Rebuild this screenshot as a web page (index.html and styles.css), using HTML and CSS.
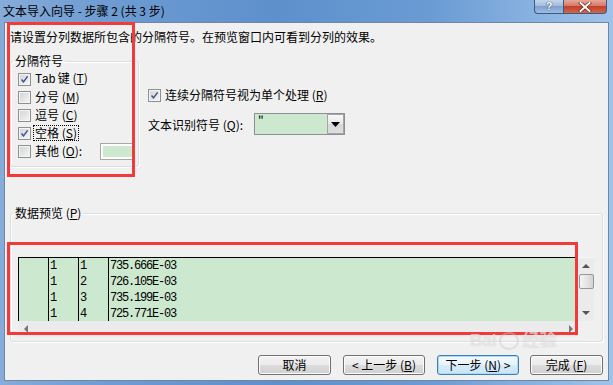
FILE: index.html
```html
<!DOCTYPE html>
<html lang="zh-CN">
<head>
<meta charset="utf-8">
<title>文本导入向导</title>
<link rel="stylesheet" href="styles.css">
</head>
<body>
<div class="window">
  <div class="titlebar">
    <span class="title">文本导入向导 - 步骤 2 (共 3 步)</span>
    <div class="caption-btns">
      <div class="cap help"><span class="q">?</span></div>
      <div class="cap close"><svg width="14" height="10" viewBox="0 0 14 10"><path d="M2.5 1 L11.5 9 M11.5 1 L2.5 9" stroke="#6b1a10" stroke-width="3.2" stroke-linecap="square"/><path d="M2.5 1 L11.5 9 M11.5 1 L2.5 9" stroke="#fff" stroke-width="2" stroke-linecap="square"/></svg></div>
    </div>
  </div>
  <div class="client">
    <p class="intro">请设置分列数据所包含的分隔符号。在预览窗口内可看到分列的效果。</p>
    <div class="middle">
      <fieldset class="group delims">
        <legend>分隔符号</legend>
        <div class="cb-row"><span class="cb"><svg viewBox="0 0 13 13"><path d="M3 6.5 L5.3 9.3 L10.2 2.8" fill="none" stroke="#3b4f8e" stroke-width="1.7"/></svg></span><span class="lbl"><span class="mono">Tab</span> 键 (<u>T</u>)</span></div>
        <div class="cb-row"><span class="cb"></span><span class="lbl">分号 (<u>M</u>)</span></div>
        <div class="cb-row"><span class="cb"></span><span class="lbl">逗号 (<u>C</u>)</span></div>
        <div class="cb-row"><span class="cb"><svg viewBox="0 0 13 13"><path d="M3 6.5 L5.3 9.3 L10.2 2.8" fill="none" stroke="#3b4f8e" stroke-width="1.7"/></svg></span><span class="lbl focus">空格 (<u>S</u>)</span></div>
        <div class="cb-row"><span class="cb"></span><span class="lbl other-lbl">其他 (<u>O</u>):</span><span class="textbox"><span class="fill"></span></span></div>
      </fieldset>
      <div class="options">
        <div class="cb-row"><span class="cb"><svg viewBox="0 0 13 13"><path d="M3 6.5 L5.3 9.3 L10.2 2.8" fill="none" stroke="#3b4f8e" stroke-width="1.7"/></svg></span><span class="lbl">连续分隔符号视为单个处理 (<u>R</u>)</span></div>
        <div class="qual-row">
          <span class="qual-lbl">文本识别符号 (<u>Q</u>):</span>
          <div class="combo"><span class="combo-val">"</span><span class="combo-btn"><svg width="9" height="5" viewBox="0 0 9 5"><path d="M0 0 H9 L4.5 5 Z" fill="#000"/></svg></span></div>
        </div>
      </div>
    </div>
    <fieldset class="group preview">
      <legend>数据预览 (<u>P</u>)</legend>
      <div class="grid-wrap">
        <div class="grid-main">
          <div class="grid">
            <div class="col c0"></div>
            <div class="col c1"><div>1</div><div>1</div><div>1</div><div>1</div></div>
            <div class="col c2"><div>1</div><div>2</div><div>3</div><div>4</div></div>
            <div class="col c3"><div>735.666E-03</div><div>726.105E-03</div><div>735.199E-03</div><div>725.771E-03</div></div>
          </div>
          <div class="vscroll">
            <span class="arrow up"></span>
            <span class="thumb"></span>
            <span class="arrow down"></span>
          </div>
        </div>
        <div class="hscroll">
          <span class="arrow left"></span>
          <span class="arrow right"></span>
        </div>
      </div>
    </fieldset>
    <div class="buttons">
      <button class="btn w73">取消</button>
      <button class="btn w82 g12">&lt; 上一步 (<u>B</u>)</button>
      <button class="btn w82 g12 focused">下一步 (<u>N</u>) &gt;</button>
      <button class="btn w73 g11">完成 (<u>F</u>)</button>
    </div>
  </div>
  <div class="mark mark-delims"></div>
  <div class="mark mark-preview"></div>
  <div class="watermark">Bai<span class="paw"></span>经验</div>
</div>
</body>
</html>
```

FILE: styles.css
```css
* { box-sizing: border-box; margin: 0; padding: 0; }
html, body { width: 613px; height: 385px; overflow: hidden; }
body {
  font-family: "Noto Sans CJK SC", "Noto Sans", sans-serif;
  font-size: 12px;
  color: #000;
  background: #7ea6d6;
}
u { text-decoration: underline; text-underline-offset: 1px; }

.window {
  position: relative;
  width: 613px;
  height: 385px;
  display: flex;
  flex-direction: column;
  background: linear-gradient(to right, #86acd9 0%, #6d9bd2 18%, #5e90cc 45%, #6a9bd3 70%, #9fc3ea 100%);
}

/* title bar */
.titlebar {
  height: 22px;
  display: flex;
  justify-content: space-between;
  align-items: flex-start;
}
.title { padding-left: 3px; line-height: 22px; font-size: 12px; white-space: nowrap; }
.caption-btns { display: flex; margin-right: 6px; }
.cap {
  height: 14px;
  display: flex;
  align-items: center;
  justify-content: center;
  border: 1px solid #3b5a82;
  border-top: none;
  overflow: hidden;
}
.help {
  width: 29px;
  border-radius: 0 0 0 4px;
  border-right: none;
  background: linear-gradient(#c4d6ec, #9cb8dc 50%, #7fa1cf 50%, #9fbde2);
}
.q {
  color: #fff;
  font-family: "Liberation Sans", sans-serif;
  font-weight: bold;
  font-size: 11px;
  line-height: 13px;
  text-shadow: 0 0 1px #2a3f60, 0 0 1px #2a3f60;
}
.close {
  width: 44px;
  border-radius: 0 0 4px 0;
  background: linear-gradient(#e6a89b, #d5735f 50%, #c2412a 50%, #d0664c);
}

/* client area */
.client {
  flex: 1;
  margin: 0 4px 4px 4px;
  border: 1px solid #6f86a6;
  background: #f0f0f0;
  padding: 0 5px 0 5px;
  display: flex;
  flex-direction: column;
}
.intro { margin-top: 6px; line-height: 16px; white-space: nowrap; }

.middle { margin-top: 9px; display: flex; align-items: flex-start; }

.group {
  border: 1px solid #d5dfe5;
  border-radius: 3px;
  box-shadow: inset 1px 1px 0 #fff, 1px 1px 0 #fff;
  min-width: 0;
}
.group legend {
  line-height: 14px;
  padding: 0 2px;
  margin-left: -5px;
  white-space: nowrap;
}
.delims {
  width: 129px;
  padding: 2px 0 6px 7px;
}
.cb-row {
  height: 18px;
  display: flex;
  align-items: center;
  gap: 4px;
  white-space: nowrap;
}
.cb {
  width: 13px;
  height: 13px;
  flex: none;
  border: 1px solid #8e8f8f;
  background: linear-gradient(135deg, #cfd2d6, #f6f6f6);
  box-shadow: inset 0 0 0 1px #f4f4f4;
  display: flex;
}
.cb svg { width: 11px; height: 11px; }
.mono { font-family: "Liberation Mono", monospace; letter-spacing: -0.5px; }
.lbl { line-height: 14px; }
.focus { outline: 1px dotted #000; outline-offset: 0px; padding: 0 1px; margin-left: -1px; }
.other-lbl { width: 61px; flex: none; }
.textbox {
  width: 35px;
  height: 17px;
  flex: none;
  border: 1px solid #a8a8a8;
  background: #fff;
  padding: 2px;
  display: flex;
}
.textbox .fill { flex: 1; background: #cce8cf; }

.options { margin-left: 9px; padding-top: 32px; }
.qual-row { margin-top: 9px; display: flex; align-items: center; height: 22px; }
.qual-lbl { width: 106px; flex: none; white-space: nowrap; }
.combo {
  width: 91px;
  height: 22px;
  border: 1px solid #8d9093;
  display: flex;
  background: #cce8cf;
}
.combo-val { flex: 1; padding-left: 3px; line-height: 14px; font-size: 12px; }
.combo-btn {
  width: 17px;
  border: 1px solid #a5a5a5;
  background: linear-gradient(#f7f7f7, #e8e8e8 50%, #d8d8d8 50%, #dedede);
  display: flex;
  align-items: center;
  justify-content: center;
}

/* preview */
.preview {
  margin-top: 39px;
  width: 593px;
  padding: 37px 8px 4px 7px;
}
.grid-wrap { height: 80px; display: flex; flex-direction: column; }
.grid-main { height: 64px; display: flex; }
.grid {
  flex: 1;
  display: flex;
  border-top: 1px solid #000;
  border-left: 1px solid #000;
  background: #cce8cf;
  font-family: "Liberation Mono", monospace;
  font-size: 12px;
  letter-spacing: -1.2px;
  line-height: 16px;
  overflow: hidden;
}
.col { flex: none; height: 100%; }
.c0 { width: 29px; }
.c1, .c2 { width: 30px; border-left: 1px solid #000; padding-left: 1px; }
.c3 { flex: 1; border-left: 1px solid #000; padding-left: 1px; }

.vscroll {
  width: 16px;
  flex: none;
  background: #ebebeb;
  display: flex;
  flex-direction: column;
  align-items: center;
  border-top: 1px solid #f6f6f6;
}
.arrow { width: 0; height: 0; border: 4px solid transparent; flex: none; }
.arrow.up { border-bottom-color: #555; border-top-width: 0; margin-top: 6px; }
.arrow.down { border-top-color: #555; border-bottom-width: 0; margin-top: auto; margin-bottom: 6px; }
.thumb {
  margin-top: 6px;
  width: 15px;
  height: 15px;
  border: 1px solid #979797;
  border-radius: 2px;
  background: linear-gradient(to right, #f4f4f4, #e2e2e2 60%, #d2d2d2);
}
.hscroll {
  height: 16px;
  background: #ebebeb;
  display: flex;
  align-items: center;
  padding: 0 5px 0 6px;
  margin-right: 16px;
}
.arrow.left { border-right-color: #777; border-left-width: 0; }
.arrow.right { border-left-color: #777; border-right-width: 0; margin-left: auto; }

/* buttons */
.buttons {
  margin-top: 13px;
  display: flex;
  justify-content: flex-end;
}
.btn {
  height: 20px;
  font-family: "Noto Sans CJK SC", "Noto Sans", sans-serif;
  font-size: 12px;
  line-height: 16px;
  color: #000;
  border: 1px solid #707070;
  border-radius: 3px;
  background: linear-gradient(#f2f2f2, #ebebeb 50%, #dddddd 50%, #cfcfcf);
  box-shadow: inset 0 0 0 1px #fcfcfc;
  white-space: nowrap;
}
.w73 { width: 73px; }
.w82 { width: 82px; }
.g11 { margin-left: 11px; }
.g12 { margin-left: 12px; }
.btn.focused {
  border-color: #3c7fb1;
  background: linear-gradient(#f4fafe, #e6f3fb 50%, #d6ebf8 50%, #c9e4f6);
  box-shadow: inset 0 0 0 1px #a9dbf6;
}

/* red annotation boxes */
.mark { position: absolute; border: 3px solid #f23a3a; }
.mark-delims { left: 7px; top: 22px; width: 128px; height: 155px; }
.mark-preview { left: 7px; top: 242px; width: 571px; height: 93px; }

/* faint watermark */
.watermark {
  position: absolute;
  left: 470px;
  top: 331px;
  display: flex;
  align-items: center;
  gap: 3px;
  pointer-events: none;
  font-family: "Liberation Sans", "Noto Sans CJK SC", sans-serif;
  font-weight: bold;
  font-size: 17px;
  line-height: 20px;
  color: rgba(255, 255, 255, 0.5);
  text-shadow: 0 0 1px rgba(150, 150, 150, 0.45);
}
.paw {
  width: 20px;
  height: 18px;
  border-radius: 50%;
  border: 2px solid rgba(200, 200, 200, 0.45);
}
```
